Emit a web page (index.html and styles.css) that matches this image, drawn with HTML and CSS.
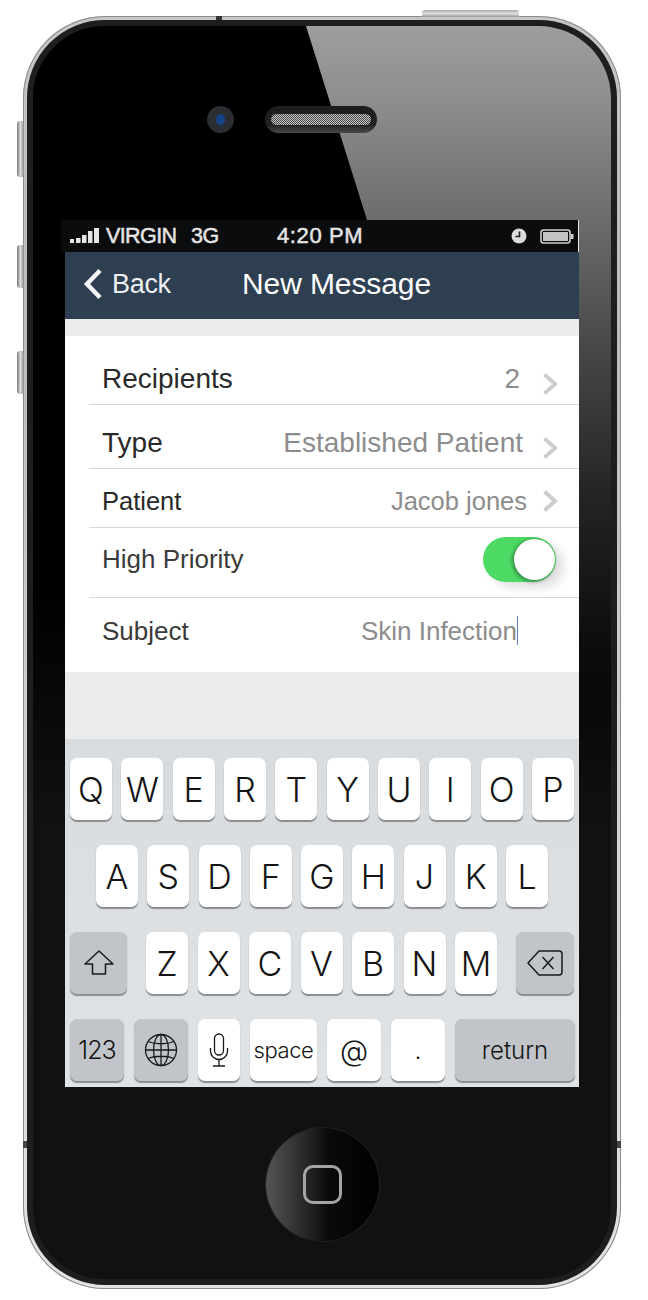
FILE: index.html
```html
<!DOCTYPE html>
<html lang="en">
<head>
<meta charset="utf-8">
<title>New Message</title>
<link rel="stylesheet" href="styles.css">
</head>
<body>
<div class="device">
  <span class="btn-top"></span>
  <span class="btn-side btn-mute"></span>
  <span class="btn-side btn-up"></span>
  <span class="btn-side btn-down"></span>
  <span class="notch-top"></span>
  <span class="notch-left"></span>
  <span class="notch-right"></span>
  <div class="face">
    <div class="glare"></div>
    <div class="earpiece">
      <span class="camera"><span class="lens"></span></span>
      <span class="speaker"><span class="mesh"></span></span>
    </div>
    <div class="screen">
      <div class="status">
        <svg class="signal" width="32" height="16" viewBox="0 0 32 16"><g fill="#e6e6e6"><rect x="0" y="11" width="4" height="4"/><rect x="6" y="10" width="4.500" height="5"/><rect x="12" y="7" width="4.500" height="8"/><rect x="18" y="3" width="4.500" height="12"/><rect x="24" y="0" width="5" height="15"/></g></svg>
        <span class="carrier">VIRGIN</span>
        <span class="net">3G</span>
        <span class="time">4:20 PM</span>
        <svg class="alarm" width="16" height="16" viewBox="0 0 16 16"><circle cx="8" cy="8" r="7.5" fill="#dcdcdc"/><path d="M8.500 3.500V8.500H4.500" fill="none" stroke="#222" stroke-width="1.6"/></svg>
        <svg class="battery" width="34" height="15" viewBox="0 0 34 15"><rect x="1" y="1" width="29" height="13" rx="2.500" fill="none" stroke="#cfcfcf" stroke-width="1.6"/><rect x="3" y="3" width="25" height="9" fill="#c4c4c4"/><rect x="31" y="5" width="2.500" height="5" fill="#cfcfcf"/></svg>
      </div>
      <header class="nav">
        <svg class="back-chev" width="20" height="32" viewBox="0 0 20 32"><path d="M17 2.500 4 16l13 13.500" fill="none" stroke="#f2f4f5" stroke-width="4.500"/></svg>
        <span class="back-label">Back</span>
        <h1 class="nav-title">New Message</h1>
      </header>
      <div class="gap-top"></div>
      <section class="list">
        <div class="row row-recipients">
          <span class="label label-lg">Recipients</span>
          <span class="value value-lg">2</span>
          <svg class="chev chev-low" width="16" height="24" viewBox="0 0 16 24"><path d="M2.500 2.500 13 12 2.500 21.500" fill="none" stroke="#cdcdcd" stroke-width="4"/></svg>
        </div>
        <div class="row row-type">
          <span class="label label-lg">Type</span>
          <span class="value value-lg">Established Patient</span>
          <svg class="chev chev-low" width="16" height="24" viewBox="0 0 16 24"><path d="M2.500 2.500 13 12 2.500 21.500" fill="none" stroke="#cdcdcd" stroke-width="4"/></svg>
        </div>
        <div class="row row-patient">
          <span class="label">Patient</span>
          <span class="value">Jacob jones</span>
          <svg class="chev" width="16" height="24" viewBox="0 0 16 24"><path d="M2.500 2.500 13 12 2.500 21.500" fill="none" stroke="#cdcdcd" stroke-width="4"/></svg>
        </div>
        <div class="row row-priority">
          <span class="label label-dim">High Priority</span>
          <span class="toggle"><span class="knob"></span></span>
        </div>
        <div class="row row-subject">
          <span class="label label-dim">Subject</span>
          <span class="value value-input">Skin Infection<span class="caret"></span></span>
        </div>
      </section>
      <div class="gap-bottom"></div>
      <section class="keyboard">
        <div class="kb-row kb-row-1">
          <span class="key">Q</span><span class="key">W</span><span class="key">E</span><span class="key">R</span><span class="key">T</span><span class="key">Y</span><span class="key">U</span><span class="key">I</span><span class="key">O</span><span class="key">P</span>
        </div>
        <div class="kb-row kb-row-2">
          <span class="key">A</span><span class="key">S</span><span class="key">D</span><span class="key">F</span><span class="key">G</span><span class="key">H</span><span class="key">J</span><span class="key">K</span><span class="key">L</span>
        </div>
        <div class="kb-row kb-row-3">
          <span class="key key-fn key-shift"><svg width="32" height="28" viewBox="0 0 32 28"><path d="M16 2 2 15h7.500v10h13V15H30Z" fill="none" stroke="#1a1a1a" stroke-width="1.500" stroke-linejoin="round"/></svg></span>
          <span class="letters">
            <span class="key">Z</span><span class="key">X</span><span class="key">C</span><span class="key">V</span><span class="key">B</span><span class="key">N</span><span class="key">M</span>
          </span>
          <span class="key key-fn key-del"><svg width="36" height="28" viewBox="0 0 36 28"><path d="M12 2h20a3 3 0 0 1 3 3v18a3 3 0 0 1-3 3H12L1 14Z" fill="none" stroke="#1a1a1a" stroke-width="1.500" stroke-linejoin="round"/><path d="m15.500 8 11 12M26.500 8l-11 12" fill="none" stroke="#1a1a1a" stroke-width="1.500"/></svg></span>
        </div>
        <div class="kb-row kb-row-4">
          <span class="key key-fn key-num">123</span>
          <span class="key key-fn key-globe"><svg width="34" height="34" viewBox="0 0 34 34"><g fill="none" stroke="#1a1a1a" stroke-width="1.300"><circle cx="17" cy="17" r="15.500"/><ellipse cx="17" cy="17" rx="7.500" ry="15.500"/><path d="M17 1.500v31M1.500 17h31M4 8.500c7 3 19 3 26 0M4 25.500c7-3 19-3 26 0"/></g></svg></span>
          <span class="key key-mic"><svg width="20" height="34" viewBox="0 0 20 34"><g fill="none" stroke="#1a1a1a" stroke-width="1.300"><rect x="5.500" y="1" width="9" height="21" rx="4.500"/><path d="M1.500 15v3a8.500 8.500 0 0 0 17 0v-3M10 26.500V33M4 33h12"/></g></svg></span>
          <span class="key key-space">space</span>
          <span class="key key-at">@</span>
          <span class="key key-dot">.</span>
          <span class="key key-fn key-return">return</span>
        </div>
      </section>
    </div>
    <div class="home"><span class="home-square"></span></div>
  </div>
</div>
</body>
</html>
```
FILE: styles.css
```css
* { box-sizing: border-box; }
html, body { margin: 0; padding: 0; background: #fff; }
body { height: 1300px; overflow: hidden; font-family: "Liberation Sans", Arial, sans-serif; }

.device {
  position: relative;
  width: 598px;
  height: 1273px;
  margin: 16px 0 0 23px;
  padding: 4px;
  border-radius: 82px;
  background: linear-gradient(180deg, #c6c6c6 0, #bcbcbc 25%, #d2d2d2 60%, #e4e4e4 100%);
  box-shadow: inset 0 0 0 1px #8c8c8c;
}
.btn-top {
  position: absolute; top: -6px; left: 399px;
  width: 97px; height: 7px;
  border-radius: 3px 3px 0 0;
  background: linear-gradient(180deg, #aaa, #dedede 50%, #999);
}
.btn-side {
  position: absolute; left: -6px; width: 7px;
  border-radius: 3px 0 0 3px;
  background: linear-gradient(90deg, #777, #ddd 50%, #888);
}
.btn-mute { top: 105px; height: 56px; }
.btn-up { top: 229px; height: 43px; }
.btn-down { top: 335px; height: 43px; }
.notch-top { position: absolute; top: 0; left: 193px; width: 6px; height: 5px; background: #333; }
.notch-left { position: absolute; top: 1125px; left: 0; width: 7px; height: 7px; background: #444; }
.notch-right { position: absolute; top: 1125px; right: 0; width: 7px; height: 7px; background: #444; }

.face {
  position: relative;
  height: 100%;
  padding: 194px 0 0 28px;
  border-radius: 78px;
  border: 6px solid #1e1e1e;
  background: linear-gradient(180deg, #000 0, #000 560px, #111 800px);
  overflow: hidden;
}
.glare {
  position: absolute; inset: 0;
  clip-path: polygon(273px 0, 100% 0, 100% 100%, 546px 100%, 546px 194px, 334px 194px);
  background: linear-gradient(180deg, #9e9e9e 0, #8a8a8a 90px, #6c6c6c 194px, #484848 320px, #242424 470px, #111 590px, transparent 680px);
}
.earpiece {
  position: absolute; top: 80px; left: 174px;
  display: flex; align-items: center; gap: 31px;
}
.camera {
  display: flex; align-items: center; justify-content: center;
  width: 27px; height: 27px; border-radius: 50%;
  background: #2a2e33;
}
.lens {
  width: 9px; height: 11px; border-radius: 50%;
  background: #164386;
}
.speaker {
  display: flex; align-items: center; justify-content: center;
  width: 112px; height: 27px; border-radius: 14px;
  background: linear-gradient(180deg, #1c1c1c 0, #222 70%, #4a4a4a 100%);
}
.mesh {
  width: 100px; height: 11px; border-radius: 6px;
  background: repeating-conic-gradient(#444 0 25%, #c8c8c8 0 50%) 0 0 / 2px 2px;
}

.screen { position: relative; width: 518px; }
.status {
  display: flex; align-items: center;
  width: 518px; height: 32px;
  padding: 0 4px 0 9px;
  background: #0b0c0e;
  border-right: 1px solid #e8e8e8;
  color: #e4e4e4;
  font-size: 21.5px;
  -webkit-text-stroke: 0.5px #e4e4e4;
}
.signal { margin-right: 4px; }
.carrier { width: 85px; letter-spacing: -0.6px; }
.net { width: 86px; letter-spacing: -0.4px; }
.time { flex: 1; font-size: 22px; letter-spacing: 0.6px; }
.alarm { margin-right: 13px; }
.nav {
  display: flex; align-items: center;
  height: 67px; margin-left: 4px; padding: 0 0 4px 18px;
  background: #2e3f52;
  color: #fff;
}
.back-chev { margin-right: 9px; }
.back-label { width: 130px; margin-top: 2px; font-size: 27px; color: #eef0f2; letter-spacing: -0.3px; }
.nav-title { margin: 0; font-size: 30px; font-weight: 400; letter-spacing: -0.1px; }
.gap-top { height: 17px; margin-left: 4px; background: #ececec; }
.gap-bottom { height: 67px; margin-left: 4px; background: #ececec; }
.list { margin-left: 4px; padding-left: 24px; background: #fff; }
.row {
  display: flex; align-items: center;
  border-bottom: 1px solid #d9d9d9;
  color: #2a2a2a;
}
.row-recipients { height: 69px; padding: 18px 21px 0 0; }
.row-type { height: 64px; padding: 12px 21px 0 0; }
.row-patient { height: 59px; padding: 6px 21px 0 0; }
.row-priority { height: 70px; padding: 0 23px 6px 0; }
.row-subject { height: 74px; border-bottom: 0; padding: 0 62px 8px 0; }
.label { flex: 1; margin-left: 13px; font-size: 25.5px; }
.label-lg { font-size: 28px; }
.label-dim { color: #3a3a3a; font-size: 26px; }
.value { color: #8c8c8c; font-size: 25.5px; margin-right: 15px; }
.value-lg { font-size: 28px; margin-right: 19px; }
.row-recipients .value { margin-right: 22px; }
.value-input { position: relative; margin-right: 0; font-size: 26px; }
.chev-low { margin-top: 10px; }
.caret {
  position: absolute; top: 0; right: -1px;
  width: 1px; height: 29px;
  background: #5b7fc0;
}
.toggle {
  display: flex; justify-content: flex-end; align-items: center;
  width: 73px; height: 45px; padding-right: 1px;
  border-radius: 23px;
  background: #4cd964;
  box-shadow: 8px 6px 10px rgba(0,0,0,.12);
}
.knob {
  width: 41px; height: 41px; border-radius: 50%;
  background: #fff;
  box-shadow: -1px 1px 4px rgba(0,0,0,.5);
}

.keyboard {
  height: 348px; margin-left: 4px; padding-top: 19px;
  display: flex; flex-direction: column; gap: 25px;
  background: linear-gradient(180deg, #d9dcdf, #e0e3e6);
}
.kb-row { display: flex; justify-content: space-between; height: 62px; padding: 0 5px; }
.kb-row-2 { padding: 0 31px; }
.kb-row-4 { padding: 0 4px 0 5px; }
.letters { display: flex; justify-content: space-between; width: 351px; }
.key {
  display: flex; align-items: center; justify-content: center;
  width: 42px; height: 62px;
  border-radius: 7px;
  background: #fff;
  box-shadow: 0 1.5px 1px #8a8c90;
  color: #141414;
  font-family: Inter, "Liberation Sans", sans-serif;
  font-size: 34px; font-weight: 300;
}
.key-fn { background: #c1c5c9; }
.key-shift { width: 57px; }
.key-del { width: 58px; }
.key-num { width: 54px; font-size: 25px; letter-spacing: -1px; }
.key-globe { width: 54px; }
.key-mic { width: 42px; }
.key-space { width: 67px; font-size: 22px; letter-spacing: -0.4px; }
.key-at { width: 54px; font-size: 29px; }
.key-dot { width: 54px; font-size: 25px; }
.key-return { width: 120px; font-size: 24px; }

.home {
  position: absolute; left: 233px; top: 1102px;
  display: flex; align-items: center; justify-content: center;
  width: 113px; height: 113px; border-radius: 50%;
  background: linear-gradient(90deg, #555 0, #2e2e2e 30%, #0a0a0a 56%, #000 100%);
  box-shadow: 0 0 0 1px #222;
}
.home-square {
  width: 39px; height: 39px;
  border: 3px solid #a4a4a4; border-radius: 10px;
}
```
